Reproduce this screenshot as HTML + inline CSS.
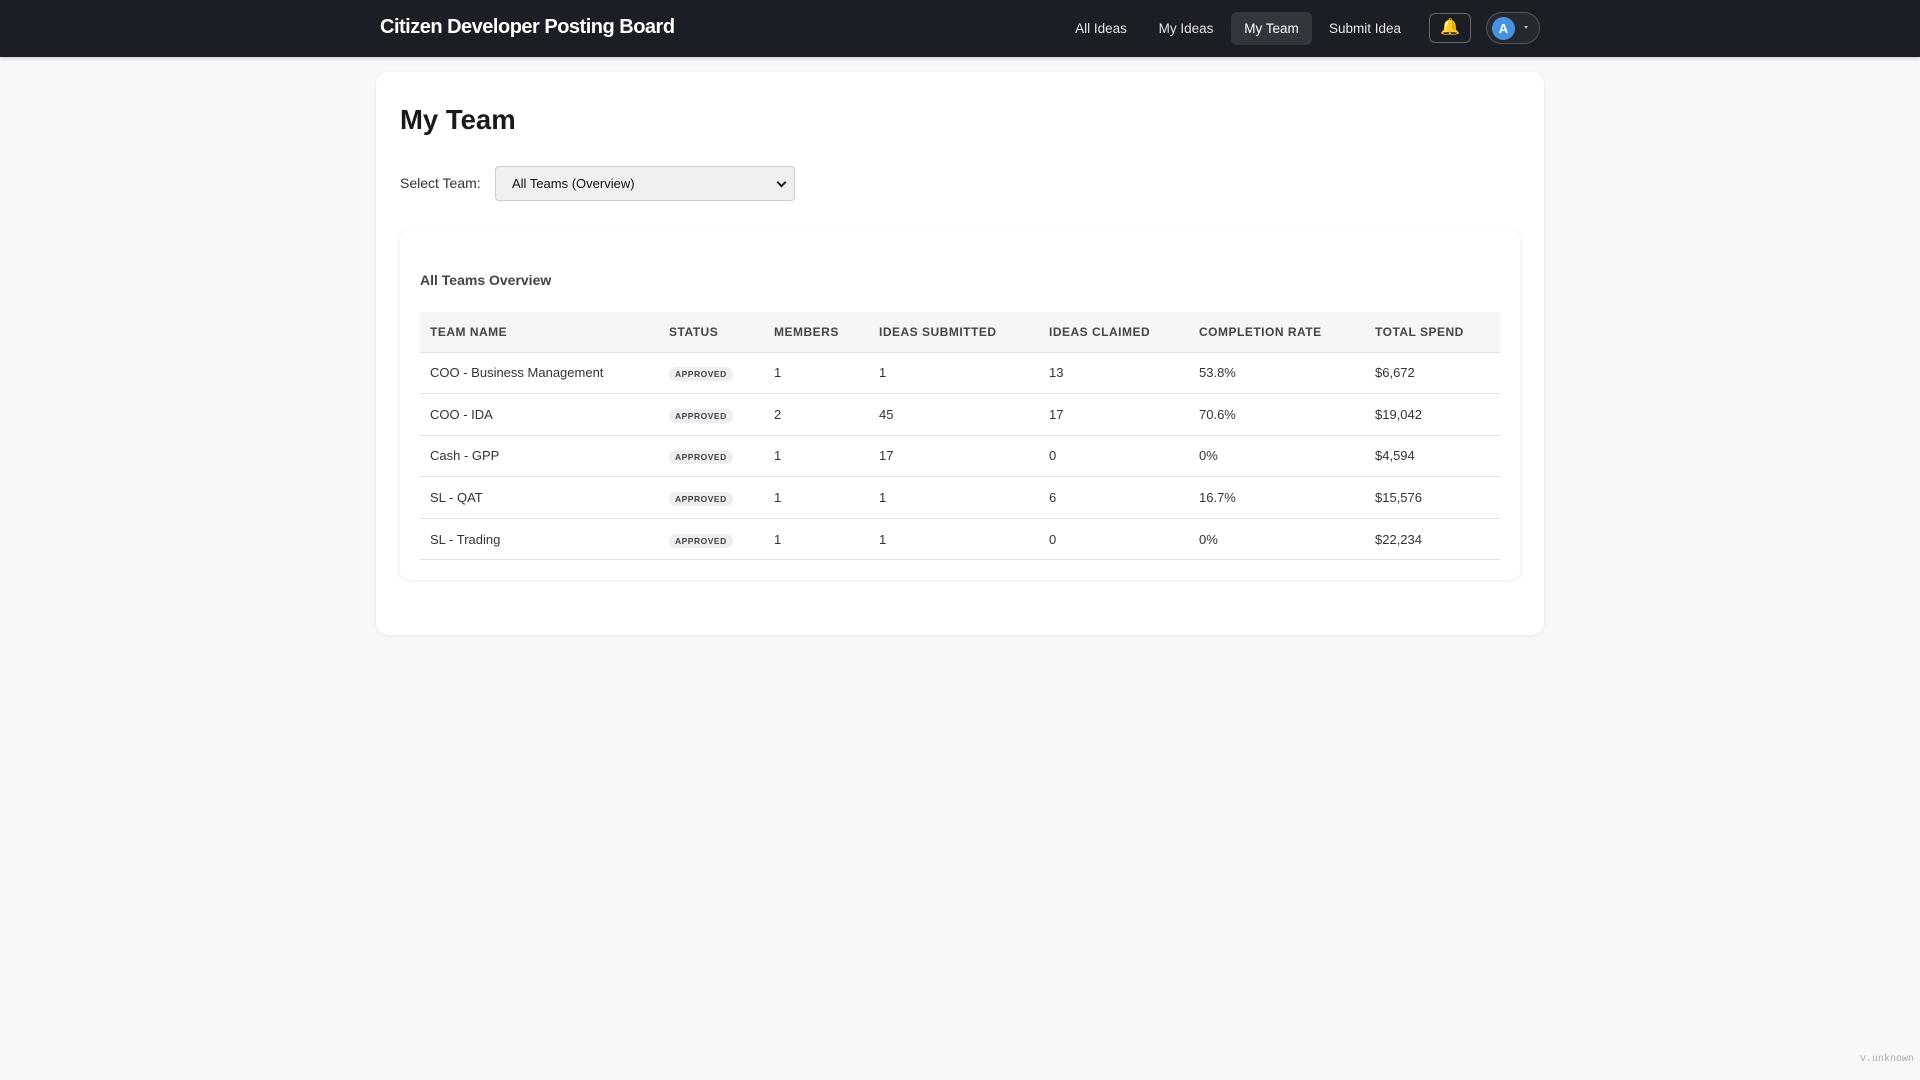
<!DOCTYPE html>
<html><head><style>
*{box-sizing:border-box;margin:0;padding:0}
body{width:1920px;height:1080px;background:#f7f8fa;font-family:"Liberation Sans",sans-serif;color:#222;position:relative;overflow:hidden}
.nav{height:57px;background:#1b1e24;position:relative;box-shadow:0 2px 4px rgba(0,0,0,.15)}
.brand{position:absolute;left:380px;top:16px;color:#fff;font-size:20px;font-weight:bold;letter-spacing:-0.5px;white-space:nowrap}
.link{position:absolute;top:12px;height:33px;line-height:33px;color:#e6e6e6;font-size:13.5px;border-radius:6px;white-space:nowrap;text-align:center}
.bell{position:absolute;left:1429px;top:13px;width:42px;height:30px;border:1px solid #666;border-radius:6px;text-align:center;line-height:28px;font-size:16px;color:#f2b705}
.av{position:absolute;left:1486px;top:12px;width:54px;height:32px;border:1px solid #555;border-radius:16px;background:#25292f}
.av .c{position:absolute;left:5px;top:4px;width:23px;height:23px;border-radius:50%;background:#4a90e2;color:#fff;font-size:13px;font-weight:bold;text-align:center;line-height:23px}
.av .t{position:absolute;left:37px;top:13px;width:0;height:0;border-left:2.5px solid transparent;border-right:2.5px solid transparent;border-top:3px solid #bbb}
.card{position:absolute;left:376px;top:72px;width:1168px;height:563px;background:#fff;border-radius:12px;box-shadow:0 1px 4px rgba(0,0,0,.08)}
h1{position:absolute;left:400px;top:104px;font-size:27.5px;font-weight:bold;color:#1a1a1a}
.lbl{position:absolute;left:400px;top:175px;font-size:14px;color:#333}
.sel{position:absolute;left:495px;top:166px;width:300px;height:35px;border:1px solid #ccc;border-radius:4px;background:#efefef;font-size:13px;padding-left:16px;line-height:33px;color:#111}
.sel:after{content:"";position:absolute;right:9px;top:12px;width:5px;height:5px;border-right:2px solid #222;border-bottom:2px solid #222;transform:rotate(45deg)}
.inner{position:absolute;left:400px;top:230px;width:1120px;height:350px;background:#fff;border-radius:10px;box-shadow:0 1px 6px rgba(0,0,0,.08)}
.ov{position:absolute;left:420px;top:272px;font-size:14px;font-weight:bold;color:#444}
table{position:absolute;left:420px;top:312px;width:1080px;border-collapse:collapse;font-size:13px}
th{background:#f5f6f8;height:40px;text-align:left;font-size:12px;color:#444;letter-spacing:.5px;padding-left:10px;border-bottom:1px solid #e3e3e3}
td{height:41.6px;padding-left:10px;border-bottom:1px solid #e3e3e3;color:#333}
.b{display:inline-block;background:#eceef1;border-radius:8px;font-size:8.5px;font-weight:bold;padding:2px 6px;color:#444;letter-spacing:.5px;margin-top:3px}
.v{position:absolute;left:1860px;top:1054px;font-family:"Liberation Mono",monospace;font-size:10px;color:#aaa}
</style></head><body>
<div class="nav">
<div class="brand">Citizen Developer Posting Board</div>
<div class="link" style="left:1066px;width:70px">All Ideas</div>
<div class="link" style="left:1150px;width:72px">My Ideas</div>
<div class="link" style="left:1231px;width:81px;background:#33363c;color:#fff">My Team</div>
<div class="link" style="left:1320px;width:90px">Submit Idea</div>
<div class="bell">🔔</div>
<div class="av"><div class="c">A</div><div class="t"></div></div>
</div>
<div class="card"></div>
<h1>My Team</h1>
<div class="lbl">Select Team:</div>
<div class="sel">All Teams (Overview)</div>
<div class="inner"></div>
<div class="ov">All Teams Overview</div>
<table>
<colgroup><col style="width:239px"><col style="width:105px"><col style="width:105px"><col style="width:170px"><col style="width:150px"><col style="width:176px"><col></colgroup>
<tr><th>TEAM NAME</th><th>STATUS</th><th>MEMBERS</th><th>IDEAS SUBMITTED</th><th>IDEAS CLAIMED</th><th>COMPLETION RATE</th><th>TOTAL SPEND</th></tr>
<tr><td>COO - Business Management</td><td><span class="b">APPROVED</span></td><td>1</td><td>1</td><td>13</td><td>53.8%</td><td>$6,672</td></tr>
<tr><td>COO - IDA</td><td><span class="b">APPROVED</span></td><td>2</td><td>45</td><td>17</td><td>70.6%</td><td>$19,042</td></tr>
<tr><td>Cash - GPP</td><td><span class="b">APPROVED</span></td><td>1</td><td>17</td><td>0</td><td>0%</td><td>$4,594</td></tr>
<tr><td>SL - QAT</td><td><span class="b">APPROVED</span></td><td>1</td><td>1</td><td>6</td><td>16.7%</td><td>$15,576</td></tr>
<tr><td>SL - Trading</td><td><span class="b">APPROVED</span></td><td>1</td><td>1</td><td>0</td><td>0%</td><td>$22,234</td></tr>
</table>
<div class="v">v.unknown</div>
</body></html>
